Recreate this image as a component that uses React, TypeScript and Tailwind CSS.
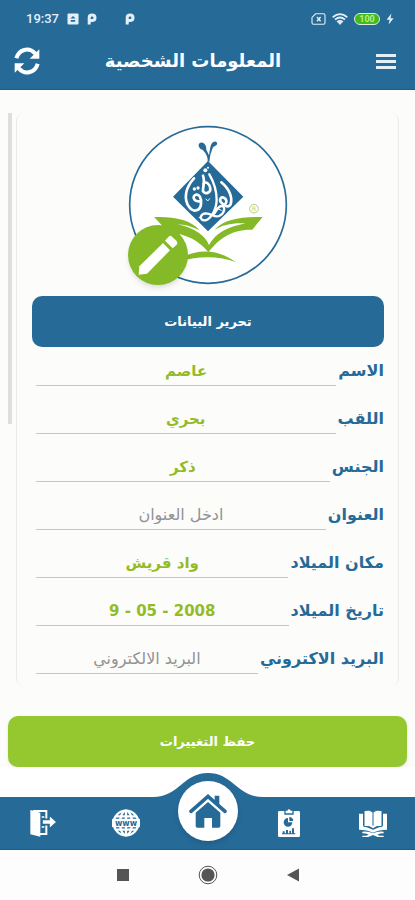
import React from 'react';

const fields = [
  { id: 'first-name', label: 'الاسم', value: 'عاصم' },
  { id: 'last-name', label: 'اللقب', value: 'بحري' },
  { id: 'gender', label: 'الجنس', value: 'ذكر' },
  { id: 'address', label: 'العنوان', placeholder: 'ادخل العنوان' },
  { id: 'birth-place', label: 'مكان الميلاد', value: 'واد قريش' },
  { id: 'birth-date', label: 'تاريخ الميلاد', value: '9 - 05 - 2008', dir: 'ltr' },
  { id: 'email', label: 'البريد الاكتروني', placeholder: 'البريد الالكتروني' }
];

function ParkingIcon() {
  return (
    <svg viewBox="0 0 10 12" className="h-3 w-[10px]" fill="none" stroke="currentColor" strokeWidth="3">
      <path d="M2.2 11.5V6M2.2 6V4.6Q2.2 2 5 2Q8 2 8 4.7Q8 7.5 5 7.5H2.2" />
    </svg>
  );
}

function StatusBar() {
  return (
    <div dir="ltr" className="flex h-[38px] items-center justify-between pl-[26px] pr-[21px] text-[#e4f0f8]">
      <div className="flex items-center gap-2">
        <span className="font-[Roboto,sans-serif] text-[13px] font-medium leading-4">19:37</span>
        <svg viewBox="0 0 12 12" className="h-3 w-3">
          <rect x="0.5" y="0.5" width="11" height="11" rx="1" fill="currentColor" />
          <path d="M6 3l2.6 2.6H3.4zM3.8 7h4.4v1.8H3.8z" fill="#266a98" />
        </svg>
        <ParkingIcon />
        <span className="w-3" />
        <ParkingIcon />
      </div>
      <div className="flex items-center gap-[6px]">
        <svg viewBox="0 0 15 12" className="h-3 w-[15px]" fill="none" stroke="currentColor" strokeWidth="1.1">
          <path d="M4.6 .8H12.6Q14 .8 14 2.2V9.8Q14 11.2 12.6 11.2H2.4Q1 11.2 1 9.8V4.4Z" />
          <path d="M6 4l3.6 4.2M9.6 4L6 8.2" strokeWidth="1.4" />
        </svg>
        <svg viewBox="0 0 16 12" className="h-3 w-4" fill="none" stroke="currentColor" strokeWidth="1.8">
          <path d="M.7 4.2Q8-2 15.3 4.2M3 6.6Q8 2.4 13 6.6M5.2 9Q8 6.8 10.8 9" />
          <path d="M8 12L5.8 9.4Q8 8 10.2 9.4Z" fill="currentColor" stroke="none" />
        </svg>
        <span className="flex h-3 w-[26px] items-center justify-center rounded-full border border-[#d9efe0] bg-[#46b91f] font-[Roboto,sans-serif] text-[9px] font-bold leading-none text-[#b5f08a]">
          100
        </span>
        <svg viewBox="0 0 8 12" className="h-3 w-2" fill="currentColor">
          <path d="M5.4 .6L.6 6.8H3.6L2.6 11.4L7.6 5.2H4.6Z" />
        </svg>
      </div>
    </div>
  );
}

function RefreshIcon() {
  return (
    <svg viewBox="0 0 78 84" className="h-7 w-[26px]" fill="none" stroke="currentColor" strokeWidth="12">
      <path d="M7 34C14 8 44 -2 64 20" />
      <path d="M76 7V35H47Z" fill="currentColor" stroke="none" />
      <path d="M71 50C64 76 34 86 14 64" />
      <path d="M2 77V49H31Z" fill="currentColor" stroke="none" />
    </svg>
  );
}

function Logo() {
  return (
    <svg viewBox="53 45 480 480" className="h-40 w-40" role="img">
      <circle cx="293" cy="285" r="235" fill="#fff" stroke="#266a98" strokeWidth="5" />
      {/* stem above the diamond */}
      <path d="M266 101C276 92 289 103 288 119L296 136C300 116 299 98 312 95C323 93 323 107 314 108C305 110 305 125 300 134L297 155H292C294 140 284 125 276 119C266 116 263 106 266 101Z" fill="#266a98" />
      <path d="M293 153L399 260L293 364L188 260Z" fill="#266a98" />
      {/* calligraphy */}
      <g fill="none" stroke="#fff" strokeLinecap="round" strokeLinejoin="round">
        <path d="M251 205C226 232 218 266 237 292C250 309 270 302 272 282C274 262 266 252 257 254C246 257 247 273 266 274" strokeWidth="8" />
        <path d="M278 197C285 214 277 230 278 244C284 254 301 249 300 236C299 222 286 211 279 222" strokeWidth="8" />
        <path d="M297 193C311 217 319 245 319 270C318 303 297 333 280 331C266 328 270 311 286 310C306 311 313 325 328 317C344 309 345 289 335 288C321 287 320 304 308 315" strokeWidth="7" />
        <path d="M333 217C358 238 367 263 361 282C356 294 343 289 333 278C325 269 332 257 342 264C350 269 350 278 344 283" strokeWidth="8" />
        <path d="M287 267l5 6 6-7M324 297l9 4M266 323l9-6" strokeWidth="3" />
      </g>
      <g fill="#fff">
        <circle cx="285" cy="181" r="6" />
        <circle cx="293" cy="173" r="3" />
        <circle cx="252" cy="237" r="5" />
        <circle cx="263" cy="234" r="5" />
      </g>
      {/* open book */}
      <g fill="#84b927">
        <path d="M131 321C193 319 241 329 268 361C243 349 222 343 202 343C251 354 284 375 296 405C318 366 355 351 406 340C366 338 336 344 313 360C342 327 388 321 457 321L426 359C365 357 325 386 294 427C270 394 230 372 173 365Z" />
        <path d="M200 457C237 418 316 410 377 457C326 437 260 437 200 457Z" />
      </g>
      <circle cx="431" cy="296" r="13" fill="none" stroke="#b5cf72" strokeWidth="3" />
      <text x="431" y="303" textAnchor="middle" fontSize="19" fill="#b5cf72">R</text>
    </svg>
  );
}

function PencilIcon() {
  return (
    <svg viewBox="55 345 176 180" className="h-[60px] w-[60px]" fill="#fff">
      <path d="M158 399L179 421L110 491L85 494L87 469Z" />
      <path d="M164 392L175 380Q180 375 185 380L199 393Q204 399 199 404L187 415Z" />
    </svg>
  );
}

function LogoutIcon() {
  return (
    <svg viewBox="0 0 84 84" className="h-7 w-7">
      <path d="M12 6H52V75H30" fill="none" stroke="#fff" strokeWidth="6" />
      <path d="M4 3L34 11V83L4 76Z" fill="#fff" />
      <path d="M39 31H60V17L84 39L60 61V47H39Z" fill="#fff" stroke="#266a98" strokeWidth="5" />
      <path d="M38 24H46M38 54H46" stroke="#fff" strokeWidth="5" />
    </svg>
  );
}

function WebIcon() {
  return (
    <svg viewBox="0 0 84 84" className="h-7 w-7" fill="none" stroke="#fff" strokeWidth="7">
      <circle cx="42" cy="42" r="37" />
      <ellipse cx="42" cy="42" rx="18" ry="37" />
      <path d="M42 4V80M10 22H74M10 62H74" />
      <rect x="0" y="29" width="84" height="26" rx="3" fill="#fff" stroke="none" />
      <text x="42" y="50" textAnchor="middle" fontSize="24" fontWeight="bold" fill="#266a98" stroke="none">www</text>
    </svg>
  );
}

function HomeIcon() {
  return (
    <svg viewBox="0 0 114 106" className="h-9 w-[38px]">
      <path d="M6 54L57 9L108 54" fill="none" stroke="#266a98" strokeWidth="11" strokeLinecap="round" />
      <path d="M77 7H91V34L77 22Z" fill="#266a98" />
      <path d="M20 58L57 26L94 58V98Q94 103 89 103H69V74H46V103H25Q20 103 20 98Z" fill="#266a98" />
    </svg>
  );
}

function ReportIcon() {
  return (
    <svg viewBox="0 0 66 84" className="h-7 w-[22px]">
      <path d="M4 6H19V17H47V6H62Q66 6 66 10V80Q66 84 62 84H4Q0 84 0 80V10Q0 6 4 6Z" fill="#fff" />
      <path d="M23 5H28Q33-3 38 5H43V13H23Z" fill="#fff" />
      <path d="M30 27V40H43A13 13 0 1 1 30 27Z" fill="#266a98" />
      <path d="M34 24A13 13 0 0 1 46 36H34Z" fill="#266a98" />
      <path d="M14 67H20V73H14ZM24 63H30V73H24ZM34 65H39V73H34ZM42 58H48V73H42ZM12 73H52V76H12Z" fill="#266a98" />
    </svg>
  );
}

function QuranIcon() {
  return (
    <svg viewBox="0 0 84 84" className="h-7 w-7" fill="#fff">
      <path d="M0 14H12V50L42 62L72 50V14H84V62Q60 62 42 71Q24 62 0 62Z" />
      <path d="M15 5Q31 0 42 9Q53 0 69 5V53Q54 49 42 59Q30 49 15 53Z" stroke="#266a98" strokeWidth="3" />
      <path d="M42 9V50" stroke="#266a98" strokeWidth="3" />
      <path d="M10 68Q28 66 42 73Q56 66 74 68V73Q62 73 55 77L62 80H74V84H56L42 78L28 84H10V80H22L29 77Q22 73 10 73Z" />
    </svg>
  );
}

function BottomNav() {
  return (
    <nav dir="ltr" className="relative bg-white pt-[30px]">
      {/* raised hump behind the home button */}
      <svg viewBox="0 0 110 26" className="absolute left-1/2 top-[6px] h-[26px] w-[110px] -translate-x-1/2" fill="#266a98">
        <path d="M0 26V24C26 24 30 0 55 0C80 0 84 24 110 24V26Z" />
      </svg>
      <div className="grid h-[53px] grid-cols-[85fr_82fr_81fr_82fr_85fr] items-center justify-items-center border-b border-[#1c5d8a] bg-[#266a98] text-white">
        <a href="#logout" aria-label="خروج"><LogoutIcon /></a>
        <a href="#web" aria-label="الموقع"><WebIcon /></a>
        <a
          href="#home"
          aria-label="الرئيسية"
          className="relative -top-3 -my-2 flex h-[60px] w-[60px] items-center justify-center rounded-full bg-white shadow-md"
        >
          <HomeIcon />
        </a>
        <a href="#reports" aria-label="التقارير"><ReportIcon /></a>
        <a href="#quran" aria-label="القرآن"><QuranIcon /></a>
      </div>
    </nav>
  );
}

function SystemBar() {
  return (
    <div dir="ltr" className="flex h-[50px] items-center justify-center gap-[65px] bg-[#fdfdfd] text-[#555]">
      <svg viewBox="0 0 20 20" className="h-5 w-5"><path d="M4 4H16V16H4Z" fill="currentColor" /></svg>
      <svg viewBox="0 0 20 20" className="h-5 w-5">
        <circle cx="10" cy="10" r="8.8" fill="none" stroke="currentColor" strokeWidth="1" />
        <circle cx="10" cy="10" r="6.6" fill="currentColor" />
      </svg>
      <svg viewBox="0 0 20 20" className="h-5 w-5"><path d="M16 3.5V16.5L4 10Z" fill="currentColor" /></svg>
    </div>
  );
}

export default function App() {
  return (
    <div dir="rtl" className="flex min-h-screen flex-col bg-[#fcfcfa] font-['DejaVu_Sans',sans-serif]">
      <header className="h-[90px] border-b border-[#1c5d8a] bg-[#266a98] text-white">
        <StatusBar />
        <div className="flex h-[46px] items-center justify-between pl-[14px] pr-[19px]">
          <button type="button" aria-label="القائمة" className="flex w-[26px] flex-col items-start gap-[3px]">
            <span className="h-[3px] w-5 bg-[#e4f0f8]" />
            <span className="h-[3px] w-5 bg-[#e4f0f8]" />
            <span className="h-[3px] w-5 bg-[#e4f0f8]" />
          </button>
          <h1 className="flex-1 pr-6 text-center text-lg font-bold leading-6">المعلومات الشخصية</h1>
          <button type="button" aria-label="تحديث">
            <RefreshIcon />
          </button>
        </div>
      </header>

      <main className="flex flex-1 items-start pl-2 pr-4 pt-[23px]">
        <form id="profile" className="flex-1 rounded-lg border-x border-[#ebebe9] pb-[3px] pl-[15px] pr-[14px] pt-3">
          <div className="relative mx-auto w-40">
            <Logo />
            <button
              type="button"
              aria-label="تغيير الصورة"
              className="absolute bottom-0 left-0 flex h-[60px] w-[60px] items-center justify-center rounded-full bg-[#84b927] shadow-md"
            >
              <PencilIcon />
            </button>
          </div>
          <button
            type="button"
            className="mt-[11px] h-[51px] w-full rounded-[10px] bg-[#266a98] text-[13px] font-bold text-white"
          >
            تحرير البيانات
          </button>
          <div className="flex flex-col">
            {fields.map((field) => (
              <div key={field.id} className="flex h-12 items-center gap-[2px] pl-1">
                <label htmlFor={field.id} className="whitespace-nowrap text-base font-bold leading-6 text-[#266a98]">
                  {field.label}
                </label>
                <input
                  id={field.id}
                  type="text"
                  dir={field.dir}
                  defaultValue={field.value}
                  placeholder={field.placeholder}
                  className="h-[30px] w-0 min-w-0 flex-1 border-b border-[#c6c6c6] bg-transparent text-center text-[15px] font-bold text-[#93bb27] outline-none placeholder:text-base placeholder:font-normal placeholder:text-[#929292]"
                />
              </div>
            ))}
          </div>
        </form>
        {/* scroll thumb */}
        <div className="mr-1 h-[311px] w-1 bg-[#dededd]" />
      </main>

      <div className="px-2">
        <button
          type="submit"
          form="profile"
          className="h-[51px] w-full rounded-[10px] bg-[#94c82e] text-[13px] font-bold text-white shadow-sm"
        >
          حفظ التغييرات
        </button>
      </div>

      <BottomNav />
      <SystemBar />
    </div>
  );
}
